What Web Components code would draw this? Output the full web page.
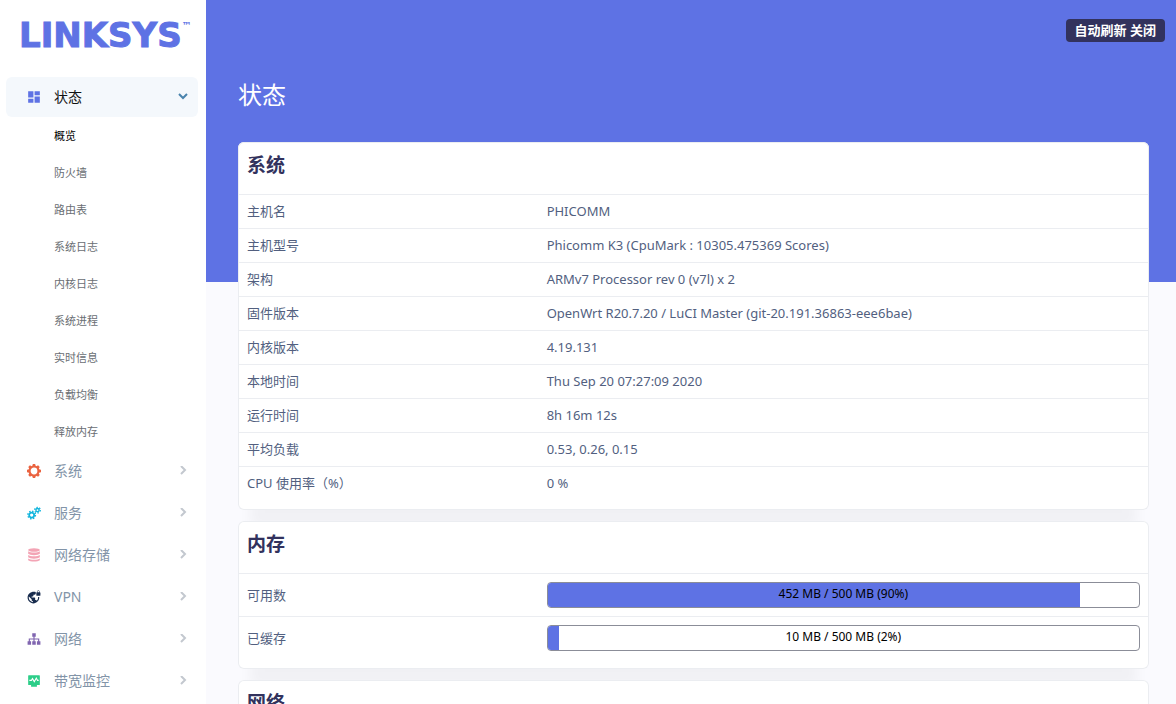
<!DOCTYPE html>
<html lang="zh-CN">
<head>
<meta charset="utf-8">
<meta name="viewport" content="width=device-width, initial-scale=1">
<title>PHICOMM - 概览 - LuCI</title>
<style>
  :root {
    --primary: #5e72e4;
    --heading: #32325d;
    --body: #525f7f;
    --line: #ebedf1;
  }
  body {
    margin: 0;
    background: #fafafe;
    color: var(--body);
    font: 13px/17px "Noto Sans", "Noto Sans CJK SC", sans-serif;
  }
</style>
</head>
<body>
<luci-app>
  <luci-sidebar slot="sidebar">
    <luci-menu icon="dashboard" label="状态" color="#5e72e4" open>
      <luci-link active>概览</luci-link>
      <luci-link>防火墙</luci-link>
      <luci-link>路由表</luci-link>
      <luci-link>系统日志</luci-link>
      <luci-link>内核日志</luci-link>
      <luci-link>系统进程</luci-link>
      <luci-link>实时信息</luci-link>
      <luci-link>负载均衡</luci-link>
      <luci-link>释放内存</luci-link>
    </luci-menu>
    <luci-menu icon="gear" label="系统" color="#ea6340"></luci-menu>
    <luci-menu icon="gears" label="服务" color="#11b5dd"></luci-menu>
    <luci-menu icon="database" label="网络存储" color="#f3a4b5"></luci-menu>
    <luci-menu icon="vpn" label="VPN" color="#172b4d"></luci-menu>
    <luci-menu icon="sitemap" label="网络" color="#8065b0"></luci-menu>
    <luci-menu icon="monitor" label="带宽监控" color="#2dce89"></luci-menu>
  </luci-sidebar>
  <luci-header slot="header" heading="状态">自动刷新 关闭</luci-header>
  <luci-card heading="系统" id="system"></luci-card>
  <luci-card heading="内存" id="memory"></luci-card>
  <luci-card heading="网络" id="network"></luci-card>
</luci-app>

<script>
const define = (name, render) => customElements.define(name, class extends HTMLElement {
  connectedCallback() {
    if (this.shadowRoot) return;
    const t = document.createElement('template');
    t.innerHTML = render(this);
    this.attachShadow({ mode: 'open' }).append(t.content.cloneNode(true));
  }
});

const ICONS = {
  dashboard: '<path d="M2 2h9v11H2zM2 15h9v7H2zM13 2h9v7h-9zM13 11h9v11h-9z"/>',
  gear: '<circle cx="12" cy="12" r="7.6" fill="none" stroke="currentColor" stroke-width="3.6"/><path d="M10 0h4l1 4H9zM10 24h4l1-4H9zM0 10v4l4 1V9zM24 10v4l-4 1V9zM2.2 5l2.8-2.8 3.5 2.1-4.2 4.2zM19 2.200l2.800 2.800-2.100 3.500-4.200-4.200zM2.200 19l2.800 2.800 3.500-2.100-4.200-4.200zM19 21.800l2.800-2.800-2.100-3.500-4.200 4.200z"/>',
  gears: '<g fill="none" stroke="currentColor"><circle cx="8" cy="15.500" r="4.300" stroke-width="3"/><circle cx="8" cy="15.500" r="6.500" stroke-width="2.400" stroke-dasharray="2.550 2.550"/><circle cx="18" cy="7" r="2.800" stroke-width="2.400"/><circle cx="18" cy="7" r="4.800" stroke-width="2.200" stroke-dasharray="2.510 2.510"/></g>',
  database: '<ellipse cx="12" cy="3.500" rx="10" ry="3"/><path d="M2 5.500c3 3 17 3 20 0v4.500c-3 3-17 3-20 0zM2 12c3 3 17 3 20 0v4c-3 3-17 3-20 0zM2 18c3 3 17 3 20 0v3c-3 3-17 3-20 0z"/>',
  vpn: '<path d="M22 4v-.5C22 2.120 20.880 1 19.500 1S17 2.120 17 3.500V4c-.55 0-1 .45-1 1v4c0 .55.45 1 1 1h5c.55 0 1-.45 1-1V5c0-.55-.45-1-1-1zm-.8 0h-3.400v-.5c0-.94.76-1.700 1.700-1.700s1.700.76 1.700 1.700V4zm-2.280 8c.04.33.08.66.08 1 0 2.080-.8 3.970-2.100 5.390-.26-.81-1-1.390-1.900-1.390h-1v-3c0-.55-.45-1-1-1H8v-2h2c.55 0 1-.45 1-1V8h2c1.100 0 2-.9 2-2V3.460c-.95-.3-1.950-.46-3-.46C5.480 3 1 7.480 1 13s4.480 10 10 10 10-4.480 10-10c0-.34-.02-.67-.05-1h-2.030zM10 20.930c-3.950-.49-7-3.850-7-7.930 0-.62.08-1.210.21-1.790L8 16v1c0 1.100.9 2 2 2v1.930z"/>',
  sitemap: '<path d="M9 2h6v6h-2v3h8v5h2v6h-6v-6h2v-3h-6v3h2v6H9v-6h2v-3H5v3h2v6H1v-6h2v-5h8V8H9z"/>',
  monitor: '<path fill-rule="evenodd" d="M3 2h18q1 0 1 1v15q0 1-1 1h-4v3H7v-3H3q-1 0-1-1V3q0-1 1-1zM4 10v2h4l1.500-2 3 5L16 9l1.500 3H20v-2h-1.500L16 5l-3.500 6L9.500 6 7 10z"/>'
};

define('luci-icon', el => `
  <style>
    :host { display: block; width: 14px; height: 14px; }
    svg { display: block; width: 100%; height: 100%; fill: currentColor; }
  </style>
  <svg viewBox="0 0 24 24" aria-hidden="true">${ICONS[el.getAttribute('name')]}</svg>`);

define('luci-app', () => `
  <style>
    :host { display: grid; grid-template-columns: 206px minmax(0, 1fr); height: 100vh; }
    main { overflow-y: auto; scrollbar-width: none; }
    .cards { display: grid; gap: 11px; margin-top: -140px; padding: 0 27px 24px 32px; }
  </style>
  <slot name="sidebar"></slot>
  <main>
    <slot name="header"></slot>
    <div class="cards"><slot></slot></div>
  </main>`);

define('luci-sidebar', () => `
  <style>
    :host { display: block; background: #fff; overflow-y: auto; scrollbar-width: none; }
    .brand {
      display: flex; align-items: flex-start; height: 77px; box-sizing: border-box;
      padding: 16px 0 0 19px; color: var(--primary); text-decoration: none;
      font: bold 34px/38px "DejaVu Sans", sans-serif; -webkit-text-stroke: 1px var(--primary);
    }
    sup { font: bold 10px/20px "DejaVu Sans", sans-serif; -webkit-text-stroke: 0; }
    nav { padding: 0 8px 0 6px; }
  </style>
  <a class="brand" href="#">LINKSYS<sup>™</sup></a>
  <nav><slot></slot></nav>`);

define('luci-menu', el => {
  const open = el.hasAttribute('open');
  return `
  <style>
    :host { display: block; }
    button {
      display: grid; grid-template-columns: 14px 1fr 10px; align-items: center; gap: 13px;
      width: 100%; height: 42px; padding: 0 10px 0 21px;
      border: 0; border-radius: 6px; background: none; color: #8294a8;
      font: inherit; font-size: 14px; line-height: 20px; text-align: left;
    }
    :host([open]) button { height: 40px; background: #f4f8fc; color: #111; }
    luci-icon { color: ${el.getAttribute('color')}; }
    .arrow { width: 10px; height: 10px; fill: none; stroke: #c3c8cf; stroke-width: 2; }
    :host([open]) .arrow { stroke: #4a84ad; }
  </style>
  <button type="button" aria-expanded="${open}">
    <luci-icon name="${el.getAttribute('icon')}"></luci-icon>
    <span>${el.getAttribute('label')}</span>
    <svg class="arrow" viewBox="0 0 10 10" aria-hidden="true"><path d="${open ? 'M1 2l4 4 4-4' : 'M3 0l4 4-4 4'}"/></svg>
  </button>
  <slot></slot>`;
});

define('luci-link', () => `
  <style>
    :host { display: block; }
    a { display: block; padding: 10px 0 10px 48px; color: #6a6e73; text-decoration: none; font-size: 11px; line-height: 17px; }
    :host([active]) a { color: #000; }
  </style>
  <a href="#"><slot></slot></a>`);

define('luci-header', el => `
  <style>
    :host { display: flex; flex-direction: column; height: 282px; box-sizing: border-box; padding: 19px 11px 0 32px; background: var(--primary); }
    button {
      align-self: flex-end; height: 23px; padding: 0 9px; border: 0; border-radius: 4px;
      background: var(--heading); color: #fff; font: inherit; font-weight: 700; line-height: 23px;
    }
    h1 { margin: 37px 0 0; color: #fff; font-size: 24px; line-height: 32px; font-weight: 400; }
  </style>
  <button type="button"><slot></slot></button>
  <h1>${el.getAttribute('heading')}</h1>`);

define('luci-meter', el => `
  <style>
    :host { display: block; position: relative; height: 26px; box-sizing: border-box; border: 1px solid #8b8d98; border-radius: 4px; overflow: hidden; background: #fff; }
    .fill { width: ${el.getAttribute('value')}%; height: 100%; background: var(--primary); }
    .text { position: absolute; inset: 0; color: #000; font-size: 12px; line-height: 22px; text-align: center; }
  </style>
  <div class="fill" role="progressbar" aria-label="${el.textContent}" aria-valuenow="${el.getAttribute('value')}" aria-valuemin="0" aria-valuemax="100"></div>
  <div class="text"><slot></slot></div>`);

const DATA = {
  system: [
    ['主机名', 'PHICOMM'],
    ['主机型号', 'Phicomm K3 (CpuMark : 10305.475369 Scores)'],
    ['架构', 'ARMv7 Processor rev 0 (v7l) x 2'],
    ['固件版本', 'OpenWrt R20.7.20 / LuCI Master (git-20.191.36863-eee6bae)'],
    ['内核版本', '4.19.131'],
    ['本地时间', 'Thu Sep 20 07:27:09 2020'],
    ['运行时间', '8h 16m 12s'],
    ['平均负载', '0.53, 0.26, 0.15'],
    ['CPU 使用率（%）', '0 %']
  ],
  memory: [
    ['可用数', '<luci-meter value="90">452 MB / 500 MB (90%)</luci-meter>'],
    ['已缓存', '<luci-meter value="2">10 MB / 500 MB (2%)</luci-meter>']
  ],
  network: []
};

define('luci-card', el => `
  <style>
    :host {
      display: block; position: relative; padding-bottom: 10px; background: #fff; border-radius: 6px;
      box-shadow: inset 0 0 0 1px var(--line), 0 30px 12px -12px rgba(0, 0, 0, .04);
    }
    h2 { height: 52px; box-sizing: border-box; margin: 0; padding: 10px 9px 0; color: var(--heading); font-size: 19px; line-height: 26px; font-weight: 700; }
    table { width: 100%; table-layout: fixed; border-collapse: separate; border-spacing: 0; }
    th { width: 33%; box-sizing: border-box; text-align: left; font-weight: 400; }
    th, td { padding: 8px 9px; border-top: 1px solid var(--line); vertical-align: middle; }
    td { padding-left: 8px; }
  </style>
  <h2>${el.getAttribute('heading')}</h2>
  <table>${DATA[el.id].map(([k, v]) => `<tr><th scope="row">${k}</th><td>${v}</td></tr>`).join('')}</table>`);
</script>
</body>
</html>
